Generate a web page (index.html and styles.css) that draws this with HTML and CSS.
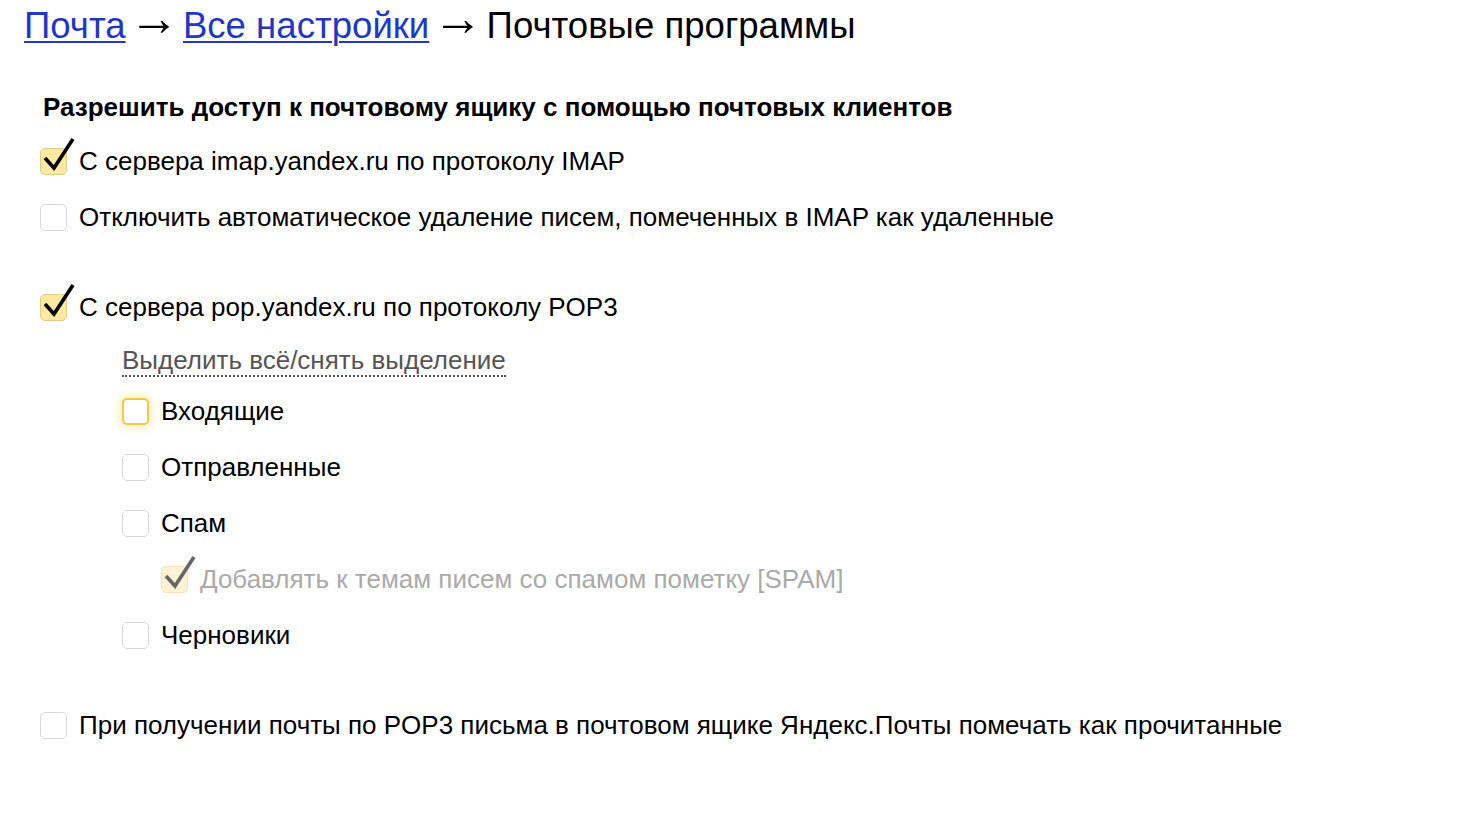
FILE: index.html
```html
<!DOCTYPE html>
<html lang="ru">
<head>
<meta charset="utf-8">
<title>Почтовые программы</title>
<link rel="stylesheet" href="styles.css">
</head>
<body>
<div class="page">
  <h1 class="title"><a href="#" class="crumb">Почта</a> <span class="arrow">→</span> <a href="#" class="crumb">Все настройки</a> <span class="arrow">→</span> Почтовые программы</h1>

  <div class="section">
    <h2 class="heading">Разрешить доступ к почтовому ящику с помощью почтовых клиентов</h2>

    <label class="row">
      <span class="box checked"><svg class="tick" viewBox="0 0 36 40" width="36" height="40"><path d="M5 22 L14 32 L33 3" fill="none" stroke="#000" stroke-width="3.6" stroke-linejoin="miter"/></svg></span>
      <span class="text">С сервера imap.yandex.ru по протоколу IMAP</span>
    </label>
    <label class="row">
      <span class="box"></span>
      <span class="text">Отключить автоматическое удаление писем, помеченных в IMAP как удаленные</span>
    </label>

    <label class="row gap-top">
      <span class="box checked"><svg class="tick" viewBox="0 0 36 40" width="36" height="40"><path d="M5 22 L14 32 L33 3" fill="none" stroke="#000" stroke-width="3.6" stroke-linejoin="miter"/></svg></span>
      <span class="text">С сервера pop.yandex.ru по протоколу POP3</span>
    </label>

    <div class="sub">
      <div class="link-row"><a href="#" class="pseudo">Выделить всё/снять выделение</a></div>
      <label class="row">
        <span class="box focused"></span>
        <span class="text">Входящие</span>
      </label>
      <label class="row">
        <span class="box"></span>
        <span class="text">Отправленные</span>
      </label>
      <label class="row">
        <span class="box"></span>
        <span class="text">Спам</span>
      </label>
      <label class="row sub2">
        <span class="box checked disabled"><svg class="tick" viewBox="0 0 36 40" width="36" height="40"><path d="M5 22 L14 32 L33 3" fill="none" stroke="#666" stroke-width="3.6" stroke-linejoin="miter"/></svg></span>
        <span class="text muted">Добавлять к темам писем со спамом пометку [SPAM]</span>
      </label>
      <label class="row">
        <span class="box"></span>
        <span class="text">Черновики</span>
      </label>
    </div>

    <label class="row gap-top">
      <span class="box"></span>
      <span class="text">При получении почты по POP3 письма в почтовом ящике Яндекс.Почты помечать как прочитанные</span>
    </label>
  </div>
</div>
</body>
</html>
```
FILE: styles.css
```css
html, body {
  margin: 0;
  padding: 0;
  background: #fff;
}
body {
  font-family: "Liberation Sans", Arial, sans-serif;
  color: #000;
}
.page {
  padding: 0 24px 0 24px;
}
.title {
  margin: 0;
  font-size: 36.6px;
  font-weight: normal;
  line-height: 52px;
  height: 52px;
}
.arrow {
  font-size: 50px;
  line-height: 0;
  vertical-align: 3px;
  margin: 0 -6.5px;
}
.crumb {
  color: #1f36c7;
  text-decoration: underline;
  text-decoration-thickness: 2px;
  text-underline-offset: 3px;
}
.section {
  padding-left: 16px;
  margin-top: 41px;
}
.heading {
  margin: 0 0 12px 3px;
  font-size: 26px;
  font-weight: bold;
  line-height: 28px;
}
.row {
  display: flex;
  align-items: center;
  height: 56px;
  cursor: pointer;
}
.gap-top {
  margin-top: 34px;
}
.box {
  position: relative;
  flex: none;
  width: 27px;
  height: 27px;
  box-sizing: border-box;
  border: 1px solid #d8d8d8;
  border-radius: 5px;
  background: #fff;
  margin-right: 12px;
}
.box.checked {
  background: #fde9a2;
  border-color: #e4cb86;
}
.box.checked.disabled {
  background: #fdf3d2;
  border-color: #f0e3bd;
}
.box.focused {
  border: 2px solid #f0c84e;
  box-shadow: 0 0 8px 2px rgba(255, 204, 0, 0.35);
}
.tick {
  position: absolute;
  left: -1px;
  top: -13px;
  overflow: visible;
}
.text {
  font-size: 26px;
  line-height: 30px;
  white-space: nowrap;
}
.muted {
  color: #aaa;
}
.sub {
  padding-left: 82px;
}
.sub2 {
  padding-left: 39px;
}
.link-row {
  height: 48px;
  display: flex;
  align-items: center;
  padding-top: 4px;
  box-sizing: border-box;
}
.pseudo {
  font-size: 26px;
  line-height: 30px;
  color: #555;
  text-decoration: none;
  border-bottom: 2px dotted #555;
}
```
